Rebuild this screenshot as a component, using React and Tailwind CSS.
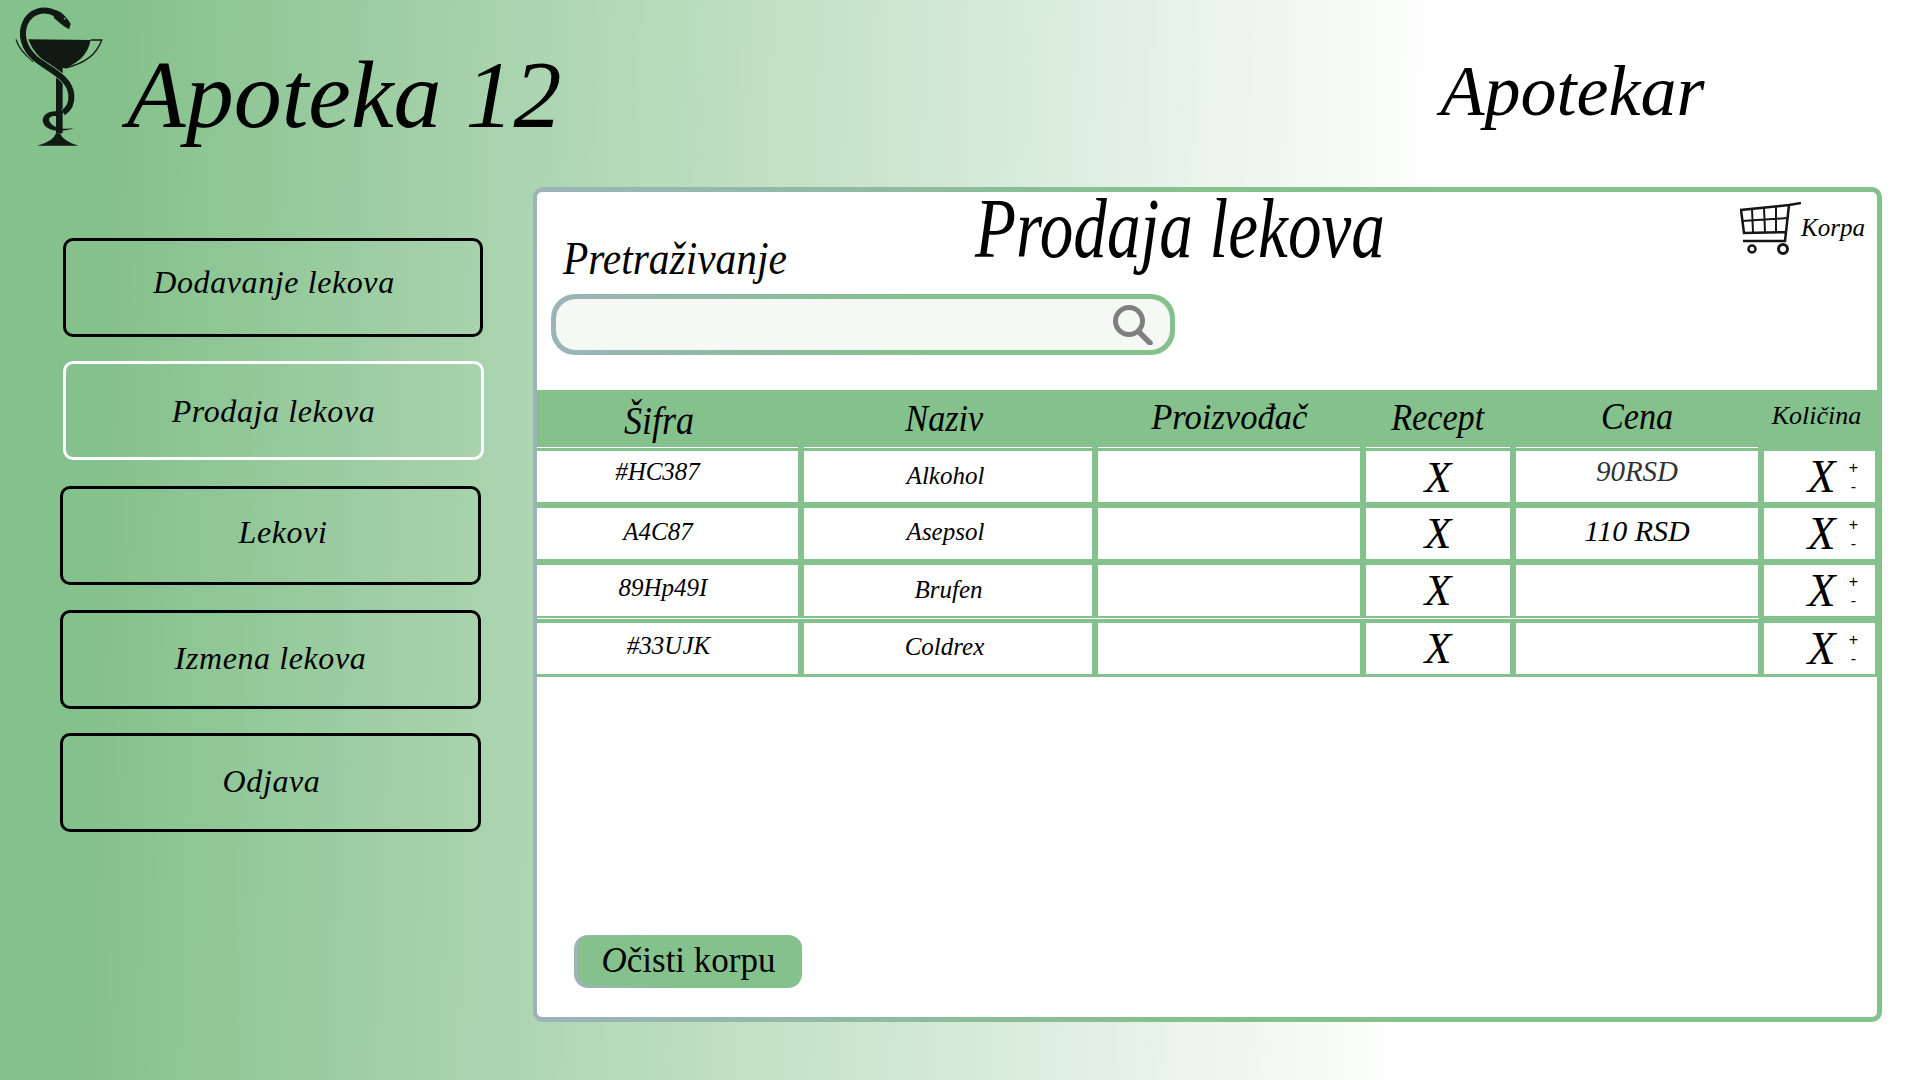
const FONT = "font-['Liberation_Serif',serif] italic"

const NAV_ITEMS = [
  { label: 'Dodavanje lekova', box: 'ml-[63px] mt-[51px] w-[420px] h-[99px] border-black', text: 'pb-[12px] pl-[2px]' },
  { label: 'Prodaja lekova', box: 'ml-[63px] mt-[24px] w-[421px] h-[99px] border-white', text: 'pt-[1px]' },
  { label: 'Lekovi', box: 'ml-[60px] mt-[26px] w-[421px] h-[99px] border-black', text: 'pb-[8px] pl-[25px]' },
  { label: 'Izmena lekova', box: 'ml-[60px] mt-[25px] w-[421px] h-[99px] border-black', text: 'pb-[3px]' },
  { label: 'Odjava', box: 'ml-[60px] mt-[24px] w-[421px] h-[99px] border-black', text: 'pb-[3px] pl-[2px]' },
]

const ROWS = [
  { sifra: '#HC387', sifraBox: 'pb-[10px] pr-[20px]', naziv: 'Alkohol', nazivBox: 'pb-[2px] pr-[5px]', cena: '90RSD', cenaBox: 'pb-[10px] text-[29px] text-[#333]', xBox: 'pt-[2px]' },
  { sifra: 'A4C87', sifraBox: 'pb-[3px] pr-[19px]', naziv: 'Asepsol', nazivBox: 'pb-[3px] pr-[5px]', cena: '110 RSD', cenaBox: 'pb-[6px] text-[30px] text-black', xBox: 'pt-[0px]' },
  { sifra: '89Hp49I', sifraBox: 'pb-[6px] pr-[9px]', naziv: 'Brufen', nazivBox: 'pb-[2px] pl-[1px]', xBox: 'pt-[0px]' },
  { sifra: '#33UJK', sifraBox: 'pb-[6px] pl-[2px]', naziv: 'Coldrex', nazivBox: 'pb-[4px] pr-[7px]', xBox: 'pt-[0px]' },
]

const COLS = 'grid grid-cols-[261px_288px_262px_144px_242px_111px] gap-x-[6px]'

function Logo() {
  return (
    <svg width="130" height="160" viewBox="0 0 390 480" className="shrink-0">
      <path d="M85 118 L272 120 C264 165 230 192 195 204 L165 204 C130 185 100 160 85 118 Z" fill="#111a12" />
      <path d="M272 120 L305 120 C290 165 250 192 195 204" fill="none" stroke="#111a12" strokeWidth="4" />
      <path d="M48 118 C55 145 75 165 100 185" fill="none" stroke="#111a12" strokeWidth="4" />
      <rect x="168" y="200" width="20" height="200" fill="#111a12" />
      <path d="M112 437 Q160 425 168 400 L180 400 Q190 425 235 437 Z" fill="#111a12" />
      <path d="M170 42 C130 20 90 35 75 70 C60 105 72 145 105 175 C140 205 210 230 214 285 C216 310 205 328 190 338" fill="none" stroke="#85c18c" strokeWidth="22" />
      <path d="M170 42 C130 20 90 35 75 70 C60 105 72 145 105 175 C140 205 210 230 214 285 C216 310 205 328 190 338" fill="none" stroke="#111a12" strokeWidth="18" />
      <path d="M190 338 C155 326 128 340 128 362 C132 392 180 400 222 385 C185 390 155 382 148 362 C144 350 160 345 180 350 Z" fill="#111a12" />
      <path d="M160 30 C180 30 198 48 212 72 L207 88 C192 80 175 66 162 54 Z" fill="#111a12" />
      <circle cx="194" cy="56" r="2.5" fill="#85c18c" />
    </svg>
  )
}

function CartIcon() {
  return (
    <svg width="61" height="53" viewBox="0 0 61 53" fill="none" stroke="#151515" className="shrink-0">
      <path d="M61 1 L49 3 L1 8 L4 31 L46 30 M49 3 L45 39 L3 39" strokeWidth="2.5" />
      <path d="M2 19 L48 16 M12 7 L13 30 M24 6 L25 30 M36 5 L36 30" strokeWidth="2" />
      <circle cx="12" cy="47" r="3.5" strokeWidth="2.5" />
      <circle cx="43" cy="47" r="4.5" strokeWidth="3" />
    </svg>
  )
}

function SearchIcon() {
  return (
    <svg width="42" height="40" viewBox="0 0 42 40" fill="none" stroke="#7f7f7f" strokeLinecap="round" className="shrink-0">
      <circle cx="18" cy="16" r="13.5" strokeWidth="5" />
      <path d="M28 27 L39 38" strokeWidth="5.5" />
    </svg>
  )
}

function NavButton({ item }) {
  return (
    <button
      type="button"
      className={`flex items-center justify-center rounded-[10px] border-[3px] text-[32px] tracking-[0.6px] text-black ${item.box}`}
    >
      <span className={item.text}>{item.label}</span>
    </button>
  )
}

function HeaderCell({ children, className }) {
  return <div className={`flex items-center justify-center border-b border-white leading-none ${className}`}>{children}</div>
}

function TableRow({ row }) {
  return (
    <div className={COLS}>
      <div className={`flex h-[51px] items-center justify-center bg-white text-[25px] ${row.sifraBox}`}>{row.sifra}</div>
      <div className={`flex h-[51px] items-center justify-center bg-white text-[25px] ${row.nazivBox}`}>{row.naziv}</div>
      <div className="h-[51px] bg-white" />
      <div className={`flex h-[51px] items-center justify-center bg-white text-[44px] ${row.xBox}`}>X</div>
      <div className={`flex h-[51px] items-center justify-center bg-white ${row.cenaBox ?? ''}`}>{row.cena}</div>
      <div className="flex h-[51px] items-center justify-end gap-[13px] bg-white pr-[17px]">
        <span className="text-[46px]">X</span>
        <span className="flex flex-col items-center font-['Liberation_Sans',sans-serif] text-[16px] not-italic leading-[19px]">
          <span>+</span>
          <span>-</span>
        </span>
      </div>
    </div>
  )
}

export default function App() {
  return (
    <div className={`flex h-[1080px] w-[1920px] flex-col overflow-hidden bg-[linear-gradient(92deg,#85c18c_6%,#ffffff_74%)] text-black ${FONT}`}>
      <header className="flex h-[187px] items-start">
        <Logo />
        <h1 className="ml-[-3px] mt-[33px] text-[96px] leading-[124px]">Apoteka 12</h1>
        <p className="ml-[879px] mt-[44px] text-[72px] leading-[94px]">Apotekar</p>
      </header>

      <div className="flex flex-1 items-start">
        <nav className="flex w-[533px] shrink-0 flex-col items-start">
          {NAV_ITEMS.map((item) => (
            <NavButton key={item.label} item={item} />
          ))}
        </nav>

        <section className="h-[835px] w-[1349px] rounded-[10px] bg-[linear-gradient(90deg,#9bb4b8_0%,#85c18c_50%)] py-[5px] pl-[4px] pr-[5px]">
          <div className="flex h-full flex-col rounded-[5px] bg-white">
            <div className="flex h-[102px] items-start">
              <p className="ml-[26px] mt-[42px] w-[224px] origin-left scale-x-[0.9] text-[46px] leading-[50px] whitespace-nowrap">Pretraživanje</p>
              <h2 className="ml-[188px] mt-[-2px] origin-left scale-x-[0.8] text-[84px] leading-[78px] whitespace-nowrap">Prodaja lekova</h2>
              <div className="ml-auto mr-[12px] mt-[10px] flex items-start">
                <CartIcon />
                <span className="mt-[11px] text-[25px] leading-[30px]">Korpa</span>
              </div>
            </div>

            <div className="ml-[14px] h-[61px] w-[624px] rounded-[24px] bg-[linear-gradient(90deg,#9bb4b8_0%,#85c18c_60%)] p-[5px]">
              <div className="flex h-full items-center justify-end rounded-[20px] bg-[#f6f8f6] pr-[17px]">
                <SearchIcon />
              </div>
            </div>

            <div className="mt-[35px] bg-[#85c18c] pb-[3px] pr-[2px]">
              <div className={`${COLS} mb-[3px] h-[58px]`}>
                <HeaderCell className="pt-[4px] pr-[18px] text-[40px]">
                  <span className="scale-x-[0.9]">Šifra</span>
                </HeaderCell>
                <HeaderCell className="pb-[2px] pr-[8px] text-[38px]">
                  <span className="scale-x-[0.9]">Naziv</span>
                </HeaderCell>
                <HeaderCell className="pb-[4px] text-[36px]">
                  <span className="scale-x-[0.96]">Proizvođač</span>
                </HeaderCell>
                <HeaderCell className="pb-[4px] text-[38px]">
                  <span className="scale-x-[0.9]">Recept</span>
                </HeaderCell>
                <HeaderCell className="pb-[6px] text-[38px]">
                  <span className="scale-x-[0.9]">Cena</span>
                </HeaderCell>
                <div className="flex items-center justify-center pb-[6px] pr-[6px] text-[26px] leading-none">Količina</div>
              </div>
              <div className="flex flex-col">
                <TableRow row={ROWS[0]} />
                <div className="h-[6px]" />
                <TableRow row={ROWS[1]} />
                <div className="h-[6px]" />
                <TableRow row={ROWS[2]} />
                <div className="mt-[2px] mb-[4px] h-px w-[1222px] bg-white" />
                <TableRow row={ROWS[3]} />
              </div>
            </div>

            <div className="mb-[29px] ml-[37px] mt-auto h-[53px] w-[228px] rounded-[14px] bg-[linear-gradient(90deg,#9bb4b8_0%,#85c18c_45%)] pb-[3px] pl-[4px] pt-[1px]">
              <div className="flex h-full items-center justify-center rounded-[12px] bg-[#85c18c] pr-[3px] text-[35px] not-italic leading-none">
                <span>
                  <span className="italic">O</span>čisti korpu
                </span>
              </div>
            </div>
          </div>
        </section>
      </div>
    </div>
  )
}
